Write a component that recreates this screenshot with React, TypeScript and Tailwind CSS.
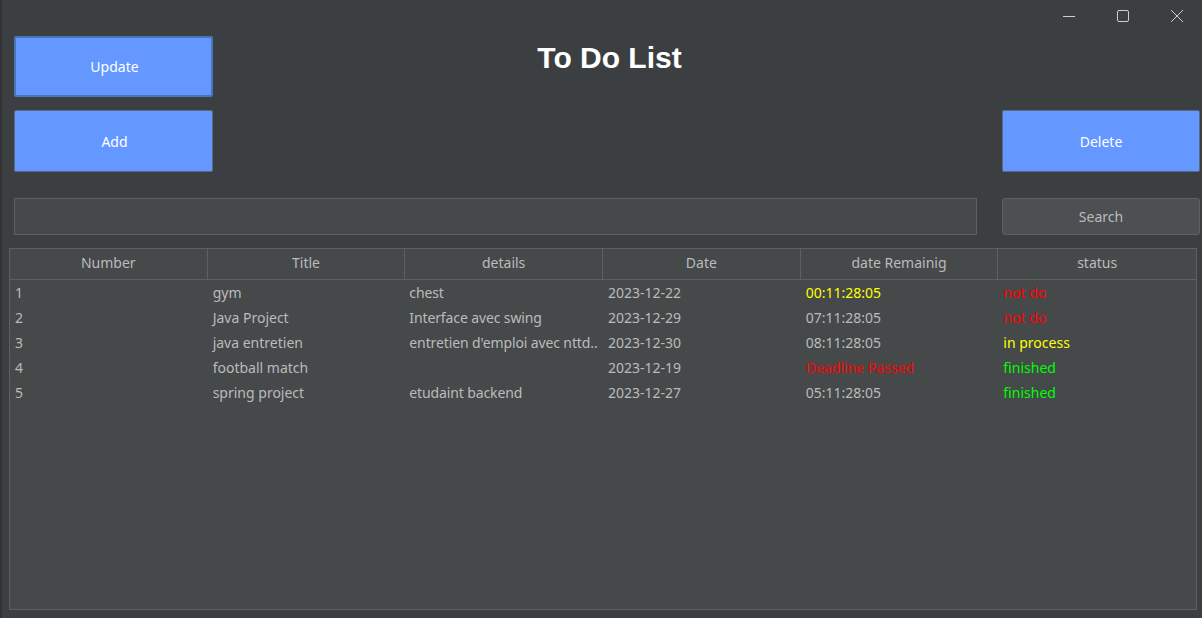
import React from "react";

const rows = [
  { n: "1", t: "gym", d: "chest", date: "2023-12-22", rem: "00:11:28:05", remC: "text-[#ffff00]", st: "not do", stC: "text-[#ff0000]" },
  { n: "2", t: "Java Project", d: "Interface avec swing", date: "2023-12-29", rem: "07:11:28:05", remC: "text-[#bbbbbb]", st: "not do", stC: "text-[#ff0000]" },
  { n: "3", t: "java entretien", d: "entretien d'emploi avec nttd..", date: "2023-12-30", rem: "08:11:28:05", remC: "text-[#bbbbbb]", st: "in process", stC: "text-[#ffff00]" },
  { n: "4", t: "football match", d: "", date: "2023-12-19", rem: "Deadline Passed", remC: "text-[#ff0000]", st: "finished", stC: "text-[#00ff00]" },
  { n: "5", t: "spring project", d: "etudaint backend", date: "2023-12-27", rem: "05:11:28:05", remC: "text-[#bbbbbb]", st: "finished", stC: "text-[#00ff00]" },
];

const headers = ["Number", "Title", "details", "Date", "date Remainig", "status"];

export default function App() {
  return (
    <div
      className="w-[1202px] h-[618px] bg-[#3c3f41] overflow-hidden flex flex-col border-l-2 border-[#2f3133]"
      style={{ fontFamily: '"Noto Sans", "Open Sans", sans-serif' }}
    >
      {/* title bar */}
      <div className="h-[36px] flex justify-end items-start pt-[9px] pr-[18px] gap-[40px]">
        <svg width="14" height="14" viewBox="0 0 14 14">
          <line x1="1" y1="7.5" x2="13" y2="7.5" stroke="#d0d0d0" strokeWidth="1" />
        </svg>
        <svg width="14" height="14" viewBox="0 0 14 14">
          <rect x="1.5" y="1.5" width="11" height="11" rx="1.5" fill="none" stroke="#d0d0d0" strokeWidth="1" />
        </svg>
        <svg width="14" height="14" viewBox="0 0 14 14">
          <path d="M1 1 L13 13 M13 1 L1 13" stroke="#d0d0d0" strokeWidth="1" />
        </svg>
      </div>

      {/* row 1 */}
      <div className="grid grid-cols-[199px_1fr_199px] gap-x-[12px] pl-[12px] pr-[2px]">
        <button className="h-[61px] bg-[#6497ff] border-2 border-[#4a76b8] rounded-[2px] text-white text-[14px] pl-[2px]">
          Update
        </button>
        <div
          className="text-center text-white font-bold text-[30px] leading-none pt-[7px] pl-[5px]"
          style={{ fontFamily: '"Liberation Sans", Arial, sans-serif' }}
        >
          To Do List
        </div>
        <div />
      </div>

      {/* row 2 */}
      <div className="flex justify-between pl-[12px] pr-[2px] mt-[13px]">
        <button className="w-[199px] h-[62px] bg-[#6497ff] border border-[#5a6a80] rounded-[2px] text-white text-[14px] pl-[2px]">
          Add
        </button>
        <button className="w-[198px] h-[62px] bg-[#6497ff] border border-[#5a6a80] rounded-[2px] text-white text-[14px]">
          Delete
        </button>
      </div>

      {/* row 3 */}
      <div className="flex pl-[12px] mt-[26px] gap-[25px]">
        <div className="w-[963px] h-[37px] bg-[#45494a] border border-[#5e6060]" />
        <button className="w-[198px] h-[37px] bg-[#4c5052] border border-[#5e6060] rounded-[3px] text-[#bbbbbb] text-[14px]">
          Search
        </button>
      </div>

      {/* table */}
      <div className="ml-[7px] mt-[13px] w-[1188px] h-[362px] bg-[#45494a] border border-[#5e6060] flex flex-col">
        <div className="grid grid-cols-6 h-[31px] border-b border-[#5e6060]">
          {headers.map((h, i) => (
            <div
              key={h}
              className={`flex items-center justify-center pb-[3px] text-[#bbbbbb] text-[14px] ${i < 5 ? "border-r border-[#5e6060]" : ""}`}
            >
              {h}
            </div>
          ))}
        </div>
        {rows.map((r) => (
          <div key={r.n} className="grid grid-cols-6 h-[25px] items-center text-[14px] text-[#bbbbbb]">
            <div className="pl-[5px] truncate">{r.n}</div>
            <div className="pl-[5px] truncate">{r.t}</div>
            <div className="pl-[4px] whitespace-nowrap overflow-hidden tracking-[-0.12px]">{r.d}</div>
            <div className="pl-[5px] truncate">{r.date}</div>
            <div className={`pl-[5px] truncate ${r.remC}`}>{r.rem}</div>
            <div className={`pl-[5px] truncate ${r.stC}`}>{r.st}</div>
          </div>
        ))}
      </div>
    </div>
  );
}
